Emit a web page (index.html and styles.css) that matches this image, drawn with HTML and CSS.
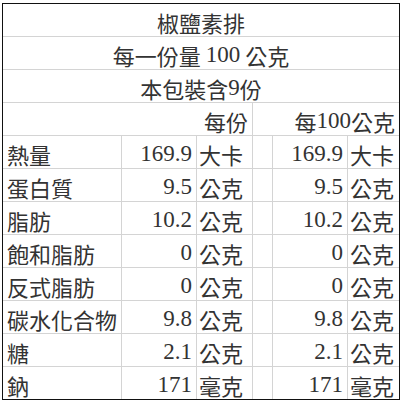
FILE: index.html
```html
<!DOCTYPE html>
<html lang="zh-Hant">
<head>
<meta charset="utf-8">
<title>椒鹽素排</title>
<link rel="stylesheet" href="styles.css">
</head>
<body>
<div class="sheet">
  <div class="cell span-all c">椒鹽素排</div>
  <div class="cell span-all c">每一份量 <span class="num">100</span> 公克</div>
  <div class="cell span-all c">本包裝含<span class="num">9</span>份</div>
  <div class="cell span-3 r">每份</div>
  <div class="cell span-3 r last-col">每<span class="num">100</span>公克</div>

  <div class="cell l">熱量</div><div class="cell r num">169.9</div><div class="cell u">大卡</div><div class="cell"></div><div class="cell r num">169.9</div><div class="cell u last-col">大卡</div>
  <div class="cell l">蛋白質</div><div class="cell r num">9.5</div><div class="cell u">公克</div><div class="cell"></div><div class="cell r num">9.5</div><div class="cell u last-col">公克</div>
  <div class="cell l">脂肪</div><div class="cell r num">10.2</div><div class="cell u">公克</div><div class="cell"></div><div class="cell r num">10.2</div><div class="cell u last-col">公克</div>
  <div class="cell l">飽和脂肪</div><div class="cell r num">0</div><div class="cell u">公克</div><div class="cell"></div><div class="cell r num">0</div><div class="cell u last-col">公克</div>
  <div class="cell l">反式脂肪</div><div class="cell r num">0</div><div class="cell u">公克</div><div class="cell"></div><div class="cell r num">0</div><div class="cell u last-col">公克</div>
  <div class="cell l">碳水化合物</div><div class="cell r num">9.8</div><div class="cell u">公克</div><div class="cell"></div><div class="cell r num">9.8</div><div class="cell u last-col">公克</div>
  <div class="cell l">糖</div><div class="cell r num">2.1</div><div class="cell u">公克</div><div class="cell"></div><div class="cell r num">2.1</div><div class="cell u last-col">公克</div>
  <div class="cell l last-row">鈉</div><div class="cell r num last-row">171</div><div class="cell u last-row">毫克</div><div class="cell last-row"></div><div class="cell r num last-row">171</div><div class="cell u last-col last-row">毫克</div>
</div>
</body>
</html>
```

FILE: styles.css
```css
html, body {
  margin: 0;
  padding: 0;
  background: #ffffff;
}

body {
  width: 403px;
  height: 403px;
  overflow: hidden;
}

.sheet {
  margin: 3px 0 0 2px;
  width: 396px;
  border: 1px solid #111111;
  display: grid;
  grid-template-columns: 119px 75px 56px 20px 75px 51px;
  grid-template-rows: repeat(11, 33px) 32px;
  font-family: "Noto Sans CJK TC", sans-serif;
  font-size: 22px;
  font-weight: 400;
  line-height: 26px;
  color: #333333;
}

.num {
  font-family: "Liberation Serif", "Times New Roman", serif;
  font-size: 23px;
}

.cell {
  box-sizing: border-box;
  border-right: 1px solid #d4d4d4;
  border-bottom: 1px solid #d4d4d4;
  display: flex;
  align-items: flex-end;
  white-space: pre;
  padding-bottom: 1px;
}

.span-all {
  grid-column: 1 / -1;
  border-right: none;
}

.span-3 {
  grid-column: span 3;
}

.last-col {
  border-right: none;
}

.last-row {
  border-bottom: none;
}

.c {
  justify-content: center;
}

.l {
  justify-content: flex-start;
  padding-left: 4px;
}

.r {
  justify-content: flex-end;
  padding-right: 4px;
}

.u {
  justify-content: flex-start;
  padding-left: 2px;
}
```
